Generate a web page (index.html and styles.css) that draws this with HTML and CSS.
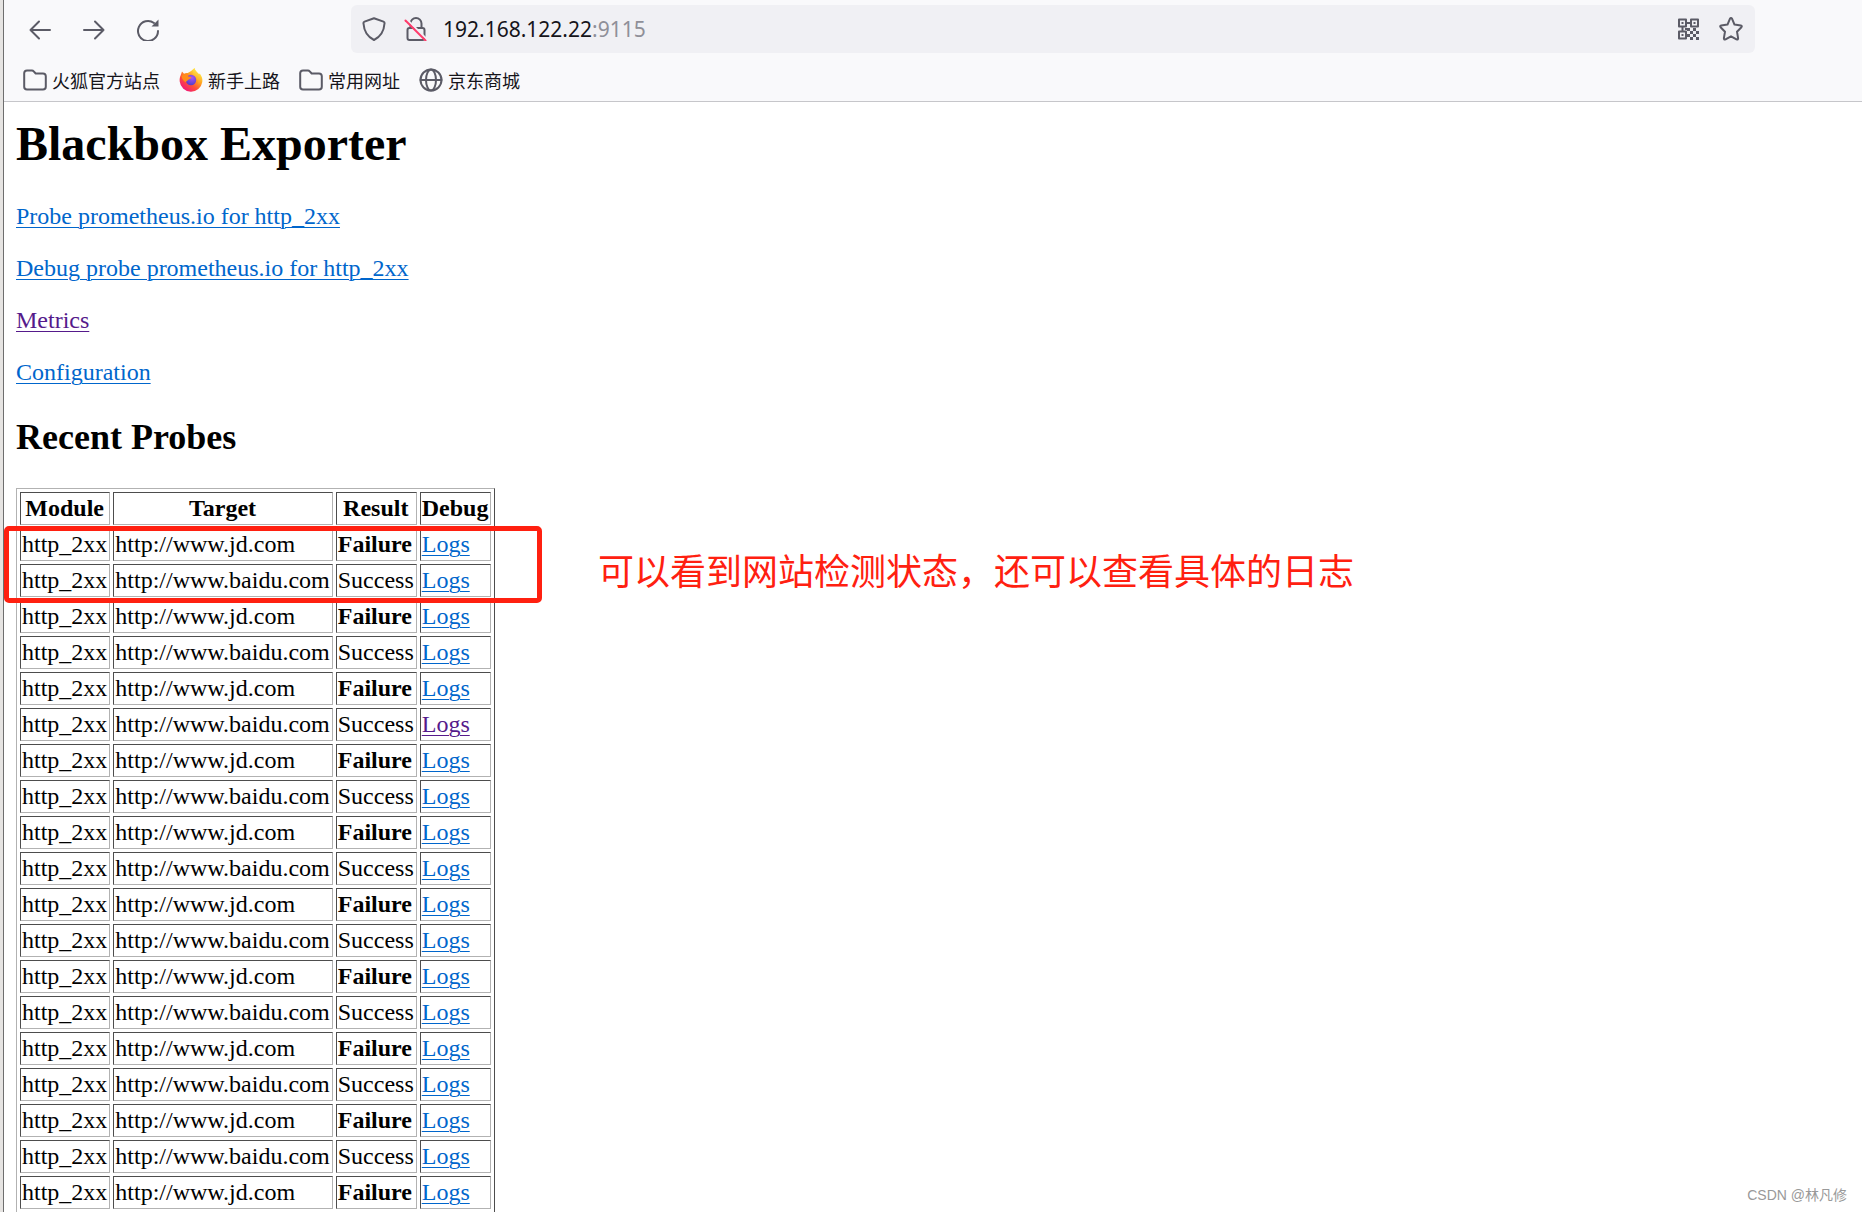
FILE: index.html
```html
<!DOCTYPE html>
<html lang="zh-CN">
<head>
<meta charset="utf-8">
<title>Blackbox Exporter</title>
<link rel="stylesheet" href="styles.css">
</head>
<body>
<div class="window">
  <header class="chrome">
    <div class="toolbar">
      <nav class="nav-buttons">
        <button type="button" class="icon-button" aria-label="后退"><svg width="24" height="24" viewBox="0 0 24 24"><path d="M22 13H2.500M11 4.500L2.500 13l8.500 8.500"/></svg></button>
        <button type="button" class="icon-button" aria-label="前进"><svg width="24" height="24" viewBox="0 0 24 24"><path d="M2 13h19.500M13 4.500l8.500 8.500-8.500 8.500"/></svg></button>
        <button type="button" class="icon-button" aria-label="刷新"><svg width="24" height="24" viewBox="0 0 24 24"><path d="M22 14A10 10 0 1 1 18 6"/><path class="solid" d="M22.500 2.500v7h-7z"/></svg></button>
      </nav>
      <div class="urlbar">
        <button type="button" class="icon-button" aria-label="跟踪保护"><svg width="24" height="24" viewBox="0 0 24 24"><path d="M12 1.200L21.500 4.600Q22.800 5.100 22.500 6.500C22 14 19 19.500 12 23 5 19.500 2 14 1.500 6.500Q1.200 5.100 2.500 4.600Z"/></svg></button>
        <button type="button" class="icon-button" aria-label="连接不安全"><svg width="24" height="24" viewBox="0 0 24 24"><path d="M6.500 11V6.500a5.500 5.500 0 0 1 11 0V11"/><rect x="3.500" y="11" width="17" height="12" rx="2"/><path class="halo" d="M3.500 3l20 20"/><path class="strike" d="M1.500 3.500l20 20"/></svg></button>
        <label class="address"><input class="host" type="text" value="192.168.122.22" size="14" aria-label="地址"><span class="port">:9115</span></label>
        <button type="button" class="icon-button" aria-label="二维码"><svg width="24" height="24" viewBox="0 0 24 24"><path d="M2 2.500h7v7H2zM14 2.500h7v7h-7zM2 14.500h7v7H2zM9 6h5M5.500 10v4"/><path class="solid" d="M4.500 5h2v2h-2zM16.500 5h2v2h-2zM4.500 17h2v2h-2zM10 11h3v3h-3zM13 14h3v3h-3zM16 11h3v3h-3zM19 14h3v3h-3zM10 17h3v3h-3zM16 17h3v3h-3zM13 20h3v3h-3zM19 20h3v3h-3zM8 11h2v2H8z"/></svg></button>
        <button type="button" class="icon-button" aria-label="收藏"><svg width="24" height="24" viewBox="0 0 24 24"><path d="M10.900 1.900Q12 .2 13.100 1.900L15.500 7.600l6.300.9q1.600.4.600 1.700L18 14.700l1.100 6.400q.1 1.900-1.600 1.300L12 19.300l-5.500 3.100q-1.700.6-1.600-1.300L6 14.700 1.600 10.200q-1-1.300.6-1.700l6.300-.9Z"/></svg></button>
      </div>
    </div>
    <nav class="bookmarks">
      <a class="bookmark" href="#"><svg width="24" height="24" viewBox="0 0 24 24"><path d="M4 2.500h5q1 0 1.700.8l2 2.200H20a2.800 2.800 0 0 1 2.800 2.800v10.400a2.800 2.800 0 0 1-2.800 2.800H4a2.800 2.800 0 0 1-2.800-2.800V5.300A2.800 2.800 0 0 1 4 2.500Z"/></svg>火狐官方站点</a>
      <a class="bookmark" href="#"><svg class="firefox" width="24" height="24" viewBox="0 0 24 24">
        <defs>
          <linearGradient id="flame" x1=".85" y1=".1" x2=".2" y2=".95"><stop offset="0" stop-color="#fff44f"/><stop offset=".35" stop-color="#ffa31f"/><stop offset=".65" stop-color="#ff4f3a"/><stop offset="1" stop-color="#f0137c"/></linearGradient>
          <radialGradient id="orb" cx=".6" cy=".3" r=".8"><stop offset="0" stop-color="#a653f5"/><stop offset="1" stop-color="#4b3cc4"/></radialGradient>
          <linearGradient id="tail" x1=".7" y1="0" x2=".4" y2="1"><stop offset="0" stop-color="#fff44f"/><stop offset="1" stop-color="#ff8a16"/></linearGradient>
        </defs>
        <path fill="url(#flame)" d="M1.600 7.500L3 3.500l2 2.200q1.800-1 3.800-.7Q12 3.500 15.500 0c.4 3 3 4.300 4.500 6.300l.8-.8C23 8.500 23.800 11 23.300 14A11.400 11.400 0 0 1 .7 13.500C.5 11 .8 9 1.600 7.500Z"/>
        <path fill="url(#tail)" d="M15.500 0c.4 3 3 4.300 4.500 6.300 2.500 4 1.800 8-.5 10.700 0-5-2-8-6-10.500Q14 3 15.500 0Z"/>
        <circle cx="12" cy="12" r="5.200" fill="url(#orb)"/>
        <path fill="#ff8c1a" d="M2.500 8q3-3 6.500-2-.8 1.500.2 2.500l3.300.4q-.3 1.600-2.500 2.300-1.800 1.600-3.500 3Q3 12 2.500 8Z"/>
      </svg>新手上路</a>
      <a class="bookmark" href="#"><svg width="24" height="24" viewBox="0 0 24 24"><path d="M4 2.500h5q1 0 1.700.8l2 2.200H20a2.800 2.800 0 0 1 2.800 2.800v10.400a2.800 2.800 0 0 1-2.800 2.800H4a2.800 2.800 0 0 1-2.800-2.800V5.300A2.800 2.800 0 0 1 4 2.500Z"/></svg>常用网址</a>
      <a class="bookmark" href="#"><svg width="24" height="24" viewBox="0 0 24 24"><circle cx="12" cy="12" r="10.500"/><ellipse cx="12" cy="12" rx="5" ry="10.500"/><path d="M1.500 12h21"/></svg>京东商城</a>
    </nav>
  </header>
  <main class="page">
    <h1>Blackbox Exporter</h1>
    <p><a href="#">Probe prometheus.io for http_2xx</a></p>
    <p><a href="#">Debug probe prometheus.io for http_2xx</a></p>
    <p><a class="seen" href="#">Metrics</a></p>
    <p><a href="#">Configuration</a></p>
    <h2>Recent Probes</h2>
    <div class="probes">
      <table>
        <thead><tr><th>Module</th><th>Target</th><th>Result</th><th>Debug</th></tr></thead>
        <tbody>
          <tr><td>http_2xx</td><td>http://www.jd.com</td><td><strong>Failure</strong></td><td><a href="#">Logs</a></td></tr>
          <tr><td>http_2xx</td><td>http://www.baidu.com</td><td>Success</td><td><a href="#">Logs</a></td></tr>
          <tr><td>http_2xx</td><td>http://www.jd.com</td><td><strong>Failure</strong></td><td><a href="#">Logs</a></td></tr>
          <tr><td>http_2xx</td><td>http://www.baidu.com</td><td>Success</td><td><a href="#">Logs</a></td></tr>
          <tr><td>http_2xx</td><td>http://www.jd.com</td><td><strong>Failure</strong></td><td><a href="#">Logs</a></td></tr>
          <tr><td>http_2xx</td><td>http://www.baidu.com</td><td>Success</td><td><a class="seen" href="#">Logs</a></td></tr>
          <tr><td>http_2xx</td><td>http://www.jd.com</td><td><strong>Failure</strong></td><td><a href="#">Logs</a></td></tr>
          <tr><td>http_2xx</td><td>http://www.baidu.com</td><td>Success</td><td><a href="#">Logs</a></td></tr>
          <tr><td>http_2xx</td><td>http://www.jd.com</td><td><strong>Failure</strong></td><td><a href="#">Logs</a></td></tr>
          <tr><td>http_2xx</td><td>http://www.baidu.com</td><td>Success</td><td><a href="#">Logs</a></td></tr>
          <tr><td>http_2xx</td><td>http://www.jd.com</td><td><strong>Failure</strong></td><td><a href="#">Logs</a></td></tr>
          <tr><td>http_2xx</td><td>http://www.baidu.com</td><td>Success</td><td><a href="#">Logs</a></td></tr>
          <tr><td>http_2xx</td><td>http://www.jd.com</td><td><strong>Failure</strong></td><td><a href="#">Logs</a></td></tr>
          <tr><td>http_2xx</td><td>http://www.baidu.com</td><td>Success</td><td><a href="#">Logs</a></td></tr>
          <tr><td>http_2xx</td><td>http://www.jd.com</td><td><strong>Failure</strong></td><td><a href="#">Logs</a></td></tr>
          <tr><td>http_2xx</td><td>http://www.baidu.com</td><td>Success</td><td><a href="#">Logs</a></td></tr>
          <tr><td>http_2xx</td><td>http://www.jd.com</td><td><strong>Failure</strong></td><td><a href="#">Logs</a></td></tr>
          <tr><td>http_2xx</td><td>http://www.baidu.com</td><td>Success</td><td><a href="#">Logs</a></td></tr>
          <tr><td>http_2xx</td><td>http://www.jd.com</td><td><strong>Failure</strong></td><td><a href="#">Logs</a></td></tr>
        </tbody>
      </table>
      <div class="highlight"></div>
      <div class="note">可以看到网站检测状态，还可以查看具体的日志</div>
    </div>
  </main>
  <div class="watermark">CSDN @林凡修</div>
</div>
</body>
</html>
```
FILE: styles.css
```css
* {
  box-sizing: border-box;
}

body {
  margin: 0;
  background: #fff;
}

/* Window frame: a grey edge with a dark line on its inner side */
.window {
  position: relative;
  display: flex;
  flex-direction: column;
  height: 100vh;
  overflow: hidden;
  padding-left: 4px;
  background: linear-gradient(to right, #e6e4e2 3px, #6e6e6e 3px, #6e6e6e 4px, #fff 4px);
}

/* Browser chrome */
.chrome {
  flex: none;
  background: #f9f9fb;
  border-bottom: 1px solid #c6c6ca;
  font-family: "Noto Sans", "Noto Sans CJK SC", sans-serif;
  color: #15141a;
}

.chrome svg {
  display: block;
  flex: none;
  fill: none;
  stroke: #5b5b66;
  stroke-width: 2;
  stroke-linecap: round;
  stroke-linejoin: round;
}

.chrome svg .solid {
  fill: #5b5b66;
  stroke: none;
}

.chrome svg .halo {
  stroke: #f0f0f4;
}

.chrome svg .strike {
  stroke: #ff3b6b;
}

.chrome .firefox {
  stroke: none;
}

.toolbar {
  display: flex;
  align-items: center;
  padding: 5px 107px 5px 24px;
}

.nav-buttons {
  display: flex;
  gap: 30px;
  width: 323px;
}

.icon-button {
  flex: none;
  padding: 0;
  border: 0;
  background: none;
}

.urlbar {
  flex: 1;
  display: flex;
  align-items: center;
  gap: 18px;
  height: 48px;
  padding: 0 12px 0 11px;
  border-radius: 6px;
  background: #f0f0f4;
}

.address {
  flex: 1;
  display: flex;
  align-items: center;
  margin-left: -3px;
  font-size: 21px;
  line-height: 28px;
}

.host {
  field-sizing: content;
  padding: 0;
  border: 0;
  outline: 0;
  background: none;
  font: inherit;
  color: inherit;
}

.port {
  color: #8f8f98;
}

.bookmarks {
  display: flex;
  gap: 19px;
  height: 43px;
  padding: 9px 19px 0;
}

.bookmark {
  display: flex;
  align-items: center;
  gap: 5px;
  height: 26px;
  font-family: "Noto Sans CJK SC", sans-serif;
  font-size: 18px;
  line-height: 26px;
  color: inherit;
  text-decoration: none;
}

/* Page content */
.page {
  flex: 1;
  min-height: 0;
  padding: 14px 12px 0;
  font-family: "Liberation Serif", "Times New Roman", serif;
  font-size: 24px;
  line-height: 28px;
  color: #000;
}

.page a {
  color: #0066cc;
  text-decoration-thickness: 1px;
  text-underline-offset: 3px;
}

.page a.seen {
  color: #551a8b;
}

h1 {
  margin: 0 0 30px;
  font-size: 48px;
  line-height: 56px;
}

p {
  margin: 0 0 24px;
}

h2 {
  margin: 30px 0;
  font-size: 36px;
  line-height: 42px;
}

.probes {
  position: relative;
}

table {
  border: 1px solid;
  border-color: #b2b2b2 #4d4d4d #4d4d4d #b2b2b2;
  border-collapse: separate;
  border-spacing: 3px;
}

th,
td {
  padding: 1px 2px 2px 1px;
  border: 1px solid;
  border-color: #4d4d4d #b2b2b2 #b2b2b2 #4d4d4d;
  text-align: left;
  white-space: nowrap;
}

th {
  text-align: center;
}

/* Marks drawn over the page */
.highlight {
  position: absolute;
  top: 38px;
  left: -12px;
  width: 538px;
  height: 77px;
  border: 5px solid #ff2010;
  border-radius: 5px;
}

.note {
  position: absolute;
  top: 55px;
  left: 582px;
  font-family: "Noto Sans CJK SC", sans-serif;
  font-size: 36px;
  line-height: 52px;
  color: #ff2010;
  white-space: nowrap;
}

.watermark {
  position: absolute;
  right: 15px;
  bottom: 6px;
  font-family: "Liberation Sans", "Noto Sans CJK SC", sans-serif;
  font-size: 14px;
  line-height: 22px;
  color: #999;
}
```
